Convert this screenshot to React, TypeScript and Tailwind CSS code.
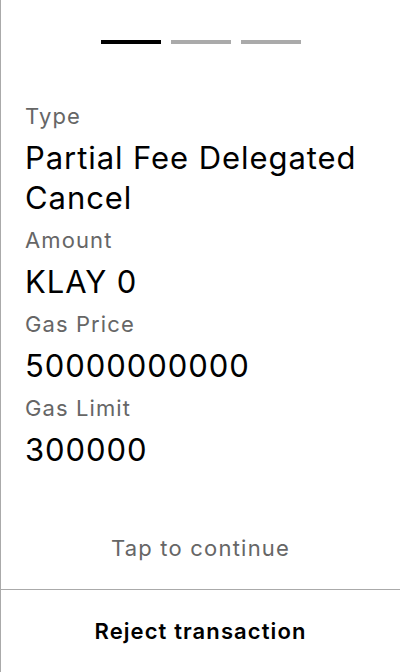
const fields = [
  { label: "Type", value: "Partial Fee Delegated Cancel" },
  { label: "Amount", value: "KLAY 0" },
  { label: "Gas Price", value: "50000000000" },
  { label: "Gas Limit", value: "300000" },
];

export default function App() {
  return (
    <div className="w-[400px] h-[672px] bg-white border-l border-[#aaaaaa] flex flex-col font-['Inter',sans-serif]">
      {/* Step indicator */}
      <div className="pt-10 flex justify-center gap-[10px]">
        <div className="w-[60px] h-1 bg-black" />
        <div className="w-[60px] h-1 bg-[#aaaaaa]" />
        <div className="w-[60px] h-1 bg-[#aaaaaa]" />
      </div>

      {/* Transaction details */}
      <div className="flex-1 mt-[50px] px-6">
        {fields.map((f) => (
          <div key={f.label}>
            <p className="py-2 text-[22px] leading-[28px] tracking-[0.05em] text-[#666666]">{f.label}</p>
            <p className="text-[31px] leading-[40px] tracking-[0.03em] text-black">{f.value}</p>
          </div>
        ))}
      </div>

      <p className="pb-[27px] text-center text-[22px] leading-[28px] tracking-[0.055em] text-[#666666]">Tap to continue</p>

      <button className="h-[83px] border-t border-[#aaaaaa] text-[22px] font-semibold tracking-[0.05em] text-black">
        Reject transaction
      </button>
    </div>
  );
}
